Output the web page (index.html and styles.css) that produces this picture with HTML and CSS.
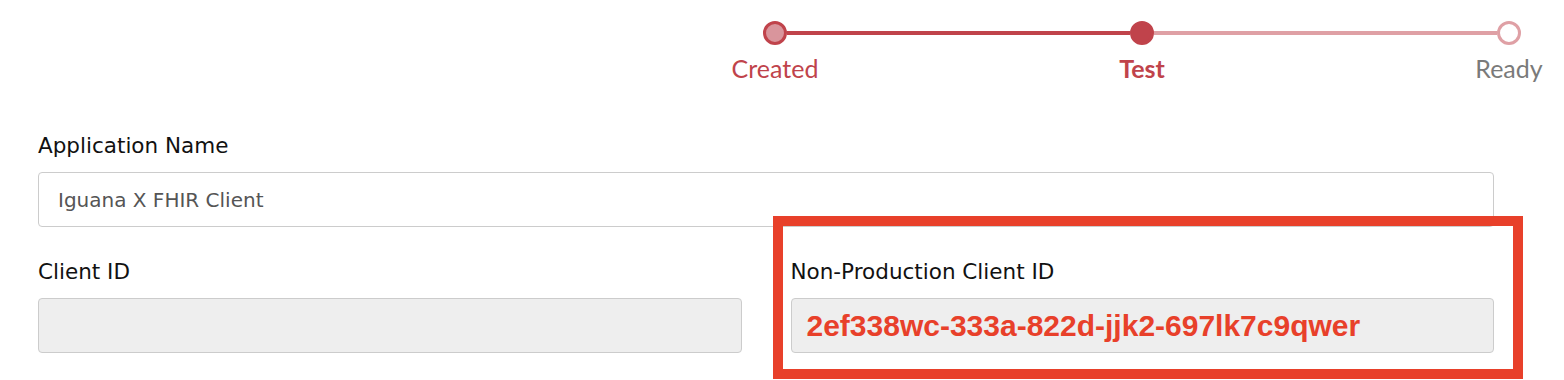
FILE: index.html
```html
<!DOCTYPE html>
<html lang="en">
<head>
  <title>Application | Iguana</title>
  <meta charset="UTF-8" />
  <meta name="viewport" content="width=device-width, initial-scale=1.0" />
  <link rel="stylesheet" href="styles.css">
</head>
<body>
  <div class="stepper">
    <div class="dot done"></div>
    <div class="bar done"></div>
    <div class="dot current"></div>
    <div class="bar"></div>
    <div class="dot"></div>

    <div class="step-label done">Created</div>
    <div class="step-label current">Test</div>
    <div class="step-label todo">Ready</div>
  </div>

  <form class="app-form">
    <div class="field">
      <label>Application Name</label>
      <div class="input">Iguana X FHIR Client</div>
    </div>

    <div class="row">
      <div class="field">
        <label>Client ID</label>
        <div class="input disabled"></div>
      </div>
      <div class="field highlighted">
        <label>Non-Production Client ID</label>
        <div class="input disabled client-id">2ef338wc-333a-822d-jjk2-697lk7c9qwer</div>
        <div class="callout"></div>
      </div>
    </div>
  </form>
</body>
</html>
```

FILE: styles.css
```css
:root {
  --brand: #c0434b;
  --brand-light: #dfa0a5;
  --brand-fill: #d9959c;
  --callout: #e8402a;
  --border: #cccccc;
  --disabled: #eeeeee;
}

body {
  margin: 0;
  min-height: 380px;
  background: #fff;
  color: #111;
  font-family: "DejaVu Sans", sans-serif;
}

/* progress stepper */
.stepper {
  display: grid;
  grid-template-columns: 24px 343px 24px 343px 24px;
  grid-template-rows: 24px auto;
  align-items: center;
  margin-left: 763px;
  padding-top: 21px;
  width: max-content;
}

.dot {
  width: 24px;
  height: 24px;
  box-sizing: border-box;
  border-radius: 50%;
  border: 3px solid var(--brand-light);
  background: #fff;
}

.dot.done {
  background: var(--brand-fill);
  border-color: var(--brand);
}

.dot.current {
  background: var(--brand);
  border-color: var(--brand);
}

.bar {
  height: 4px;
  background: var(--brand-light);
}

.bar.done {
  background: var(--brand);
}

.step-label {
  grid-row: 2;
  display: flex;
  justify-content: center;
  white-space: nowrap;
  font-family: Lato, "Open Sans", sans-serif;
  font-size: 25px;
  padding-top: 8px;
}

.step-label.done { grid-column: 1; color: var(--brand); }
.step-label.current { grid-column: 3; color: var(--brand); font-weight: bold; }
.step-label.todo { grid-column: 5; color: #7a7a7a; }

/* form */
.app-form {
  padding: 49px 70px 0 38px;
}

.field {
  display: flex;
  flex-direction: column;
}

.field label {
  font-size: 21.5px;
  line-height: 28px;
  margin-bottom: 12px;
}

.input {
  height: 55px;
  box-sizing: border-box;
  border: 1px solid var(--border);
  border-radius: 4px;
  padding: 0 19px;
  display: flex;
  align-items: center;
  font-size: 20px;
  color: #555;
}

.input.disabled {
  background: var(--disabled);
}

.row {
  display: grid;
  grid-template-columns: 1fr 1fr;
  column-gap: 49px;
  margin-top: 31px;
}

.client-id {
  padding-left: 15px;
  font-family: "Liberation Sans", Arial, sans-serif;
  font-weight: bold;
  font-size: 30px;
  color: var(--callout);
}

.highlighted {
  position: relative;
}

/* annotation frame drawn over the field */
.callout {
  position: absolute;
  left: -18px;
  right: -29px;
  top: -42px;
  bottom: -26px;
  border: 10px solid var(--callout);
}
```
